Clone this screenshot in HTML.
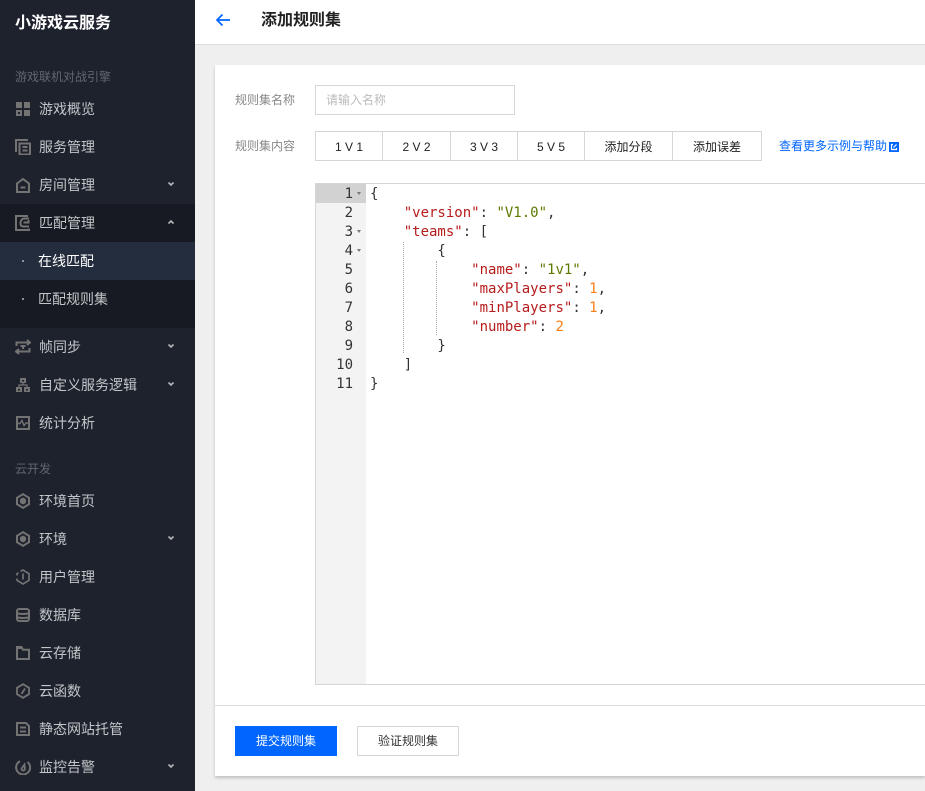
<!DOCTYPE html>
<html lang="zh"><head><meta charset="utf-8"><title>添加规则集</title>
<style>
html,body{margin:0;padding:0;width:925px;height:791px;overflow:hidden;background:#efefef}
body{font-family:"Liberation Sans","Noto Sans CJK SC",sans-serif;position:relative}
div,span,a{position:absolute;white-space:nowrap}
#side{left:0;top:0;width:195px;height:791px;background:#1e222d}
.t{font-size:14px;line-height:20px;color:#c1c6c8;left:39px}
.g{font-size:12px;line-height:16px;color:#62676e;left:15px}
svg.i{position:absolute;left:15px;width:16px;height:16px;fill:none;stroke:#737373;stroke-width:2}
svg.c{position:absolute;left:166px;width:10px;height:10px;fill:none;stroke:#b4b7ba;stroke-width:1.6}
#hdr{left:195px;top:0;width:730px;height:44px;background:#fff;border-bottom:1px solid #ddd}
#card{left:215px;top:65px;width:710px;height:711px;background:#fff;box-shadow:0 2px 3px rgba(0,0,0,.2)}
.lb{font-size:12px;line-height:16px;color:#888;left:235px}
.b{top:131px;height:28px;line-height:30px;border:1px solid #d6d6d6;border-width:1px 1px 1px 0;text-align:center;font-size:12px;color:#222;background:#fff}
#code,#nums{font-family:"DejaVu Sans Mono","Liberation Mono",monospace;font-size:14px;line-height:19px}
#code{left:370px;top:185px;color:#333;white-space:pre}
#nums{left:316px;top:185px;width:37px;text-align:right;color:#333;white-space:pre}
.k{position:static;color:#b71c1c}.s{position:static;color:#5c7a00}.n{position:static;color:#fb7e14}
.f{width:0;height:0;border-left:2.500px solid transparent;border-right:2.500px solid transparent;border-top:3px solid #777;left:357px}
.v{width:0;border-left:1px dotted #aaa}
</style></head><body>
<div id="side">
<div style="left:15px;top:13px;font-size:16px;line-height:22px;font-weight:bold;color:#fff">小游戏云服务</div>
<div class="g" style="top:69px">游戏联机对战引擎</div>
<div style="left:0;top:204px;width:195px;height:38px;background:#171a22"></div>
<div style="left:0;top:242px;width:195px;height:38px;background:#242d3d"></div>
<div style="left:0;top:280px;width:195px;height:48px;background:#171a22"></div>

<svg class="i" style="top:101px" viewBox="0 0 16 16"><path stroke="none" fill="#737373" d="M1 1h6v6H1zM9 1h6v6H9zM9 9h6v6H9zM1 9h6v6H1z"/><path stroke="none" fill="#1e222d" d="M3 11h2v2H3z"/></svg>
<div class="t" style="top:99px">游戏概览</div>
<svg class="i" style="top:139px" viewBox="0 0 16 16"><path d="M1 13V1h12M4.500 4.500h10.500v11H4.500zM7.500 8h5M7.500 11.500h5"/></svg>
<div class="t" style="top:137px">服务管理</div>
<svg class="i" style="top:177px" viewBox="0 0 16 16"><path d="M2 15V6.500L8 2l6 4.500V15zM5.500 10.500h5"/></svg>
<div class="t" style="top:175px">房间管理</div>
<svg class="c" style="top:179px" viewBox="0 0 10 10"><path d="M2.500 3.500 5 6l2.500-2.500"/></svg>
<svg class="i" style="top:215px" viewBox="0 0 16 16"><path d="M13 1H1v14h13v-1.500M14 3.500H9.500C6.500 3.500 5.500 6 5.500 8.500c0 2 1 3 3 3H14M8.500 7.500h5V5"/></svg>
<div class="t" style="top:213px">匹配管理</div>
<svg class="c" style="top:217px" viewBox="0 0 10 10"><path d="M2.500 6.500 5 4l2.500 2.500"/></svg>
<div style="left:22px;top:260px;width:2px;height:2px;background:#8c9097"></div>
<div class="t" style="left:38px;top:251px;color:#fff">在线匹配</div>
<div style="left:22px;top:298px;width:2px;height:2px;background:#8c9097"></div>
<div class="t" style="left:38px;top:289px">匹配规则集</div>

<svg class="i" style="top:339px" viewBox="0 0 16 16"><path d="M1.500 7V3.500H14M12 1 15 3.500 12 6M14.500 9v3.500H2M4 10 1 12.500 4 15M5.500 7h5M8 7v3"/></svg>
<div class="t" style="top:337px">帧同步</div>
<svg class="c" style="top:341px" viewBox="0 0 10 10"><path d="M2.500 3.500 5 6l2.500-2.500"/></svg>
<svg class="i" style="top:377px" viewBox="0 0 16 16"><path stroke="none" fill="#737373" d="M5 1h6v5H5zM1 10h6v5H1zM9 10h6v5H9z"/><path stroke-width="1.200" d="M8 6v2M4 10V8h8v2"/><path stroke="none" fill="#1e222d" d="M7 3h2v1.500H7zM3 12h2v1.500H3zM11 12h2v1.500h-2z"/></svg>
<div class="t" style="top:375px">自定义服务逻辑</div>
<svg class="c" style="top:379px" viewBox="0 0 10 10"><path d="M2.500 3.500 5 6l2.500-2.500"/></svg>
<svg class="i" style="top:415px" viewBox="0 0 16 16"><path d="M2 2h12v12H2z"/><path stroke-width="1.400" d="M2 8.500h3l2-3 2 5 2-2.500h3"/></svg>
<div class="t" style="top:413px">统计分析</div>

<div class="g" style="top:461px">云开发</div>
<svg class="i" style="top:493px" viewBox="0 0 16 16"><path d="M8 1.200 14 4.800v6.400L8 14.800 2 11.200V4.800z"/><circle cx="8" cy="8" r="3.200" fill="#737373" stroke="none"/></svg>
<div class="t" style="top:491px">环境首页</div>
<svg class="i" style="top:531px" viewBox="0 0 16 16"><path d="M8 1.200 14 4.800v6.400L8 14.800 2 11.200V4.800z"/><circle cx="8" cy="8" r="3.200" fill="#737373" stroke="none"/></svg>
<div class="t" style="top:529px">环境</div>
<svg class="c" style="top:533px" viewBox="0 0 10 10"><path d="M2.500 3.500 5 6l2.500-2.500"/></svg>
<svg class="i" style="top:569px" viewBox="0 0 16 16"><path stroke-width="1.700" d="M5.500 2.400 8 1l6 3.700v6.600L8 15l-6-3.700V9.500M2 6.500V4.700L3.500 3.800M8 4.500v6"/></svg>
<div class="t" style="top:567px">用户管理</div>
<svg class="i" style="top:607px" viewBox="0 0 16 16"><path d="M4.500 2h7C13 2 14 2.800 14 4v8c0 1.200-1 2-2.500 2h-7C3 14 2 13.200 2 12V4c0-1.200 1-2 2.500-2zM2 6.200c2 1 10 1 12 0M2 10.200c2 1 10 1 12 0"/></svg>
<div class="t" style="top:605px">数据库</div>
<svg class="i" style="top:645px" viewBox="0 0 16 16"><path stroke-width="2" d="M2 14V3h5l1 1.800h6V14z"/><path stroke="none" fill="#737373" d="M1 1h6l1.500 3H1z"/></svg>
<div class="t" style="top:643px">云存储</div>
<svg class="i" style="top:683px" viewBox="0 0 16 16"><path stroke-width="1.800" d="M8 1.200 14 4.800v6.400L8 14.800 2 11.200V4.800zM10 5.500 6.500 11"/></svg>
<div class="t" style="top:681px">云函数</div>
<svg class="i" style="top:721px" viewBox="0 0 16 16"><path d="M2 2h9l3 3v9H2zM5 6.500h6M5 10.500h6"/></svg>
<div class="t" style="top:719px">静态网站托管</div>
<svg class="i" style="top:759px" viewBox="0 0 16 16"><path d="M5 2.200A7 7 0 1 0 12.500 3"/><path d="M9.500 5.500 6.500 9.500c0 1.500 1 2.200 2 2 1.200-.3 1.500-1.300 1.300-2.300z" stroke-width="1.800"/></svg>
<div class="t" style="top:757px">监控告警</div>
<svg class="c" style="top:761px" viewBox="0 0 10 10"><path d="M2.500 3.500 5 6l2.500-2.500"/></svg>
</div>

<div id="hdr">
<svg style="position:absolute;left:20px;top:12px" width="16" height="16" viewBox="0 0 16 16" fill="none" stroke="#0066ff" stroke-width="1.700"><path d="M15 8H2M7.500 2.500 2 8l5.500 5.500"/></svg>
<div style="left:66px;top:10px;font-size:16px;line-height:22px;font-weight:bold;color:#222">添加规则集</div>
</div>

<div id="card"></div>
<div class="lb" style="top:92px">规则集名称</div>
<div style="left:315px;top:85px;width:198px;height:28px;border:1px solid #d6d6d6;background:#fff"></div>
<div style="left:326px;top:92px;font-size:12px;line-height:16px;color:#bbb">请输入名称</div>
<div class="lb" style="top:138px">规则集内容</div>
<div style="left:315px;top:131px;width:1px;height:30px;background:#d6d6d6"></div>
<div class="b" style="left:316px;width:66px">1 V 1</div>
<div class="b" style="left:383px;width:67px">2 V 2</div>
<div class="b" style="left:451px;width:66px">3 V 3</div>
<div class="b" style="left:518px;width:66px">5 V 5</div>
<div class="b" style="left:585px;width:87px">添加分段</div>
<div class="b" style="left:673px;width:88px">添加误差</div>
<div style="left:779px;top:138px;font-size:12px;line-height:16px;color:#0066ff">查看更多示例与帮助</div>
<svg style="position:absolute;left:889px;top:142px" width="10" height="10" viewBox="0 0 10 10"><path fill="#0066ff" d="M0 0h10v10H0z"/><path fill="#fff" d="M2 2h2.500v1H3v4h4V5.500h1V8H2z" opacity="0"/><path fill="#fff" d="M2 2h2v6h4V6h-2L4 8H2z" opacity="0"/><path fill="none" stroke="#fff" stroke-width="1.200" d="M4 2.500H2.500v5h5V6"/><path fill="none" stroke="#fff" stroke-width="1.200" d="M4.500 5.500 7.500 2.500"/></svg>

<div style="left:315px;top:183px;width:610px;height:500px;border:1px solid #d6d6d6;border-right:0;background:#fff"></div>
<div style="left:316px;top:184px;width:50px;height:500px;background:#f3f3f3"></div>
<div style="left:316px;top:184px;width:50px;height:19px;background:#d2d2d2"></div>
<div id="nums">1
2
3
4
5
6
7
8
9
10
11</div>
<div class="f" style="top:192px"></div><div class="f" style="top:230px"></div><div class="f" style="top:249px"></div>
<div class="v" style="left:403px;top:242px;height:111px"></div>
<div class="v" style="left:436px;top:261px;height:74px"></div>
<div id="code">{
    <span class="k">"version"</span>: <span class="s">"V1.0"</span>,
    <span class="k">"teams"</span>: [
        {
            <span class="k">"name"</span>: <span class="s">"1v1"</span>,
            <span class="k">"maxPlayers"</span>: <span class="n">1</span>,
            <span class="k">"minPlayers"</span>: <span class="n">1</span>,
            <span class="k">"number"</span>: <span class="n">2</span>
        }
    ]
}</div>

<div style="left:215px;top:705px;width:710px;height:1px;background:#ddd"></div>
<div style="left:235px;top:726px;width:102px;height:30px;line-height:31px;background:#0066ff;color:#fff;font-size:12px;text-align:center">提交规则集</div>
<div style="left:357px;top:726px;width:100px;height:28px;line-height:29px;border:1px solid #d6d6d6;color:#333;font-size:12px;text-align:center;background:#fff">验证规则集</div>
</body></html>
